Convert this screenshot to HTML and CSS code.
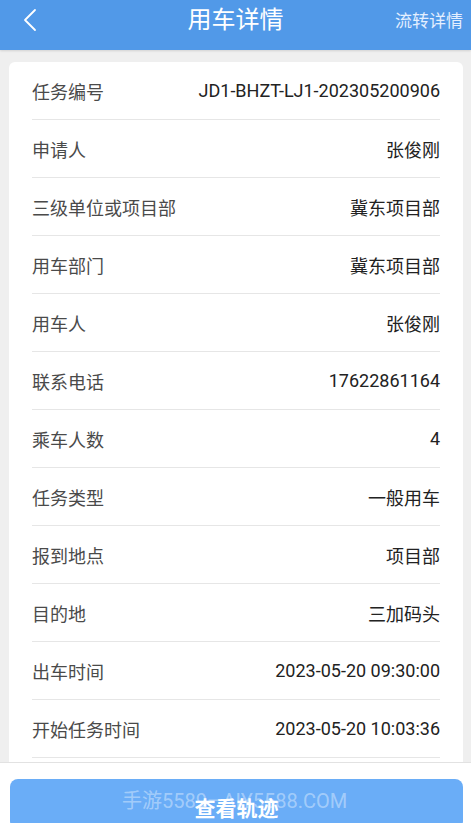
FILE: index.html
```html
<!doctype html>
<html lang="zh-CN">
 <head>
  <meta charset="UTF-8">
  <title>用车详情</title>
  <link rel="stylesheet" href="styles.css">
 </head>
 <body>
  <div class="page">
   <div class="top_bar">
    <a href="javascript:void(0);" class="back">
     <svg width="16" height="24" viewBox="0 0 16 24"><polyline points="13,2 3,12 13,22" fill="none" stroke="#fff" stroke-width="1.8" stroke-linecap="round" stroke-linejoin="round"/></svg>
    </a>
    <h1 class="title">用车详情</h1>
    <a href="javascript:void(0);" class="flow">流转详情</a>
   </div>
   <!--详情列表-->
   <div class="main">
    <ul class="card">
     <li><span class="label">任务编号</span><span class="val">JD1-BHZT-LJ1-202305200906</span></li>
     <li><span class="label">申请人</span><span class="val">张俊刚</span></li>
     <li><span class="label">三级单位或项目部</span><span class="val">冀东项目部</span></li>
     <li><span class="label">用车部门</span><span class="val">冀东项目部</span></li>
     <li><span class="label">用车人</span><span class="val">张俊刚</span></li>
     <li><span class="label">联系电话</span><span class="val">17622861164</span></li>
     <li><span class="label">乘车人数</span><span class="val">4</span></li>
     <li><span class="label">任务类型</span><span class="val">一般用车</span></li>
     <li><span class="label">报到地点</span><span class="val">项目部</span></li>
     <li><span class="label">目的地</span><span class="val">三加码头</span></li>
     <li><span class="label">出车时间</span><span class="val">2023-05-20 09:30:00</span></li>
     <li><span class="label">开始任务时间</span><span class="val">2023-05-20 10:03:36</span></li>
     <li><span class="label">结束任务时间</span><span class="val">2023-05-20 16:20:00</span></li>
    </ul>
   </div>
   <!--底部按钮-->
   <div class="foot">
    <a href="javascript:void(0);" class="btn">查看轨迹</a>
    <span class="mark">手游5589—AIY5588.COM</span>
   </div>
  </div>
 </body>
</html>
```
FILE: styles.css
```css
*{padding:0;margin:0;box-sizing:border-box;}
ul,li{list-style:none;}
a{text-decoration:none;}
body{background:#efefef;font-family:Roboto,"Noto Sans CJK SC",sans-serif;}
.page{width:471px;height:823px;display:flex;flex-direction:column;overflow:hidden;}
.top_bar{height:50px;flex:none;background:#5199e8;display:flex;align-items:center;position:relative;padding:0 8px 0 22px;box-shadow:0 1px 2px rgba(0,0,0,.12);}
.back{display:flex;width:16px;height:24px;margin-top:-10px;}
.title{position:absolute;left:0;right:0;top:4px;text-align:center;color:#fff;font-size:24px;font-weight:normal;line-height:32px;pointer-events:none;}
.flow{margin-left:auto;color:#e4efff;font-size:17px;margin-top:-12px;}
.main{flex:1;min-height:0;overflow:hidden;padding:12px 8px 0 9px;}
.card{background:#fff;border-radius:6px 6px 0 0;padding:0 23px;}
.card li{height:58px;display:flex;align-items:center;justify-content:space-between;border-bottom:1px solid #e6e6e6;font-size:18px;}
.card .label{color:#4a4a4a;}
.card .val{color:#222;}
.foot{height:61px;flex:none;background:#fff;padding:16px 8px 0 10px;position:relative;border-top:1px solid #e2e2e2;}
.btn{display:flex;justify-content:center;height:50px;padding-top:13px;background:#6aadf7;border-radius:8px;color:#fff;font-size:21px;font-weight:bold;}
.mark{position:absolute;left:122px;top:22px;color:rgba(255,255,255,.4);font-size:20px;white-space:nowrap;pointer-events:none;}
```
